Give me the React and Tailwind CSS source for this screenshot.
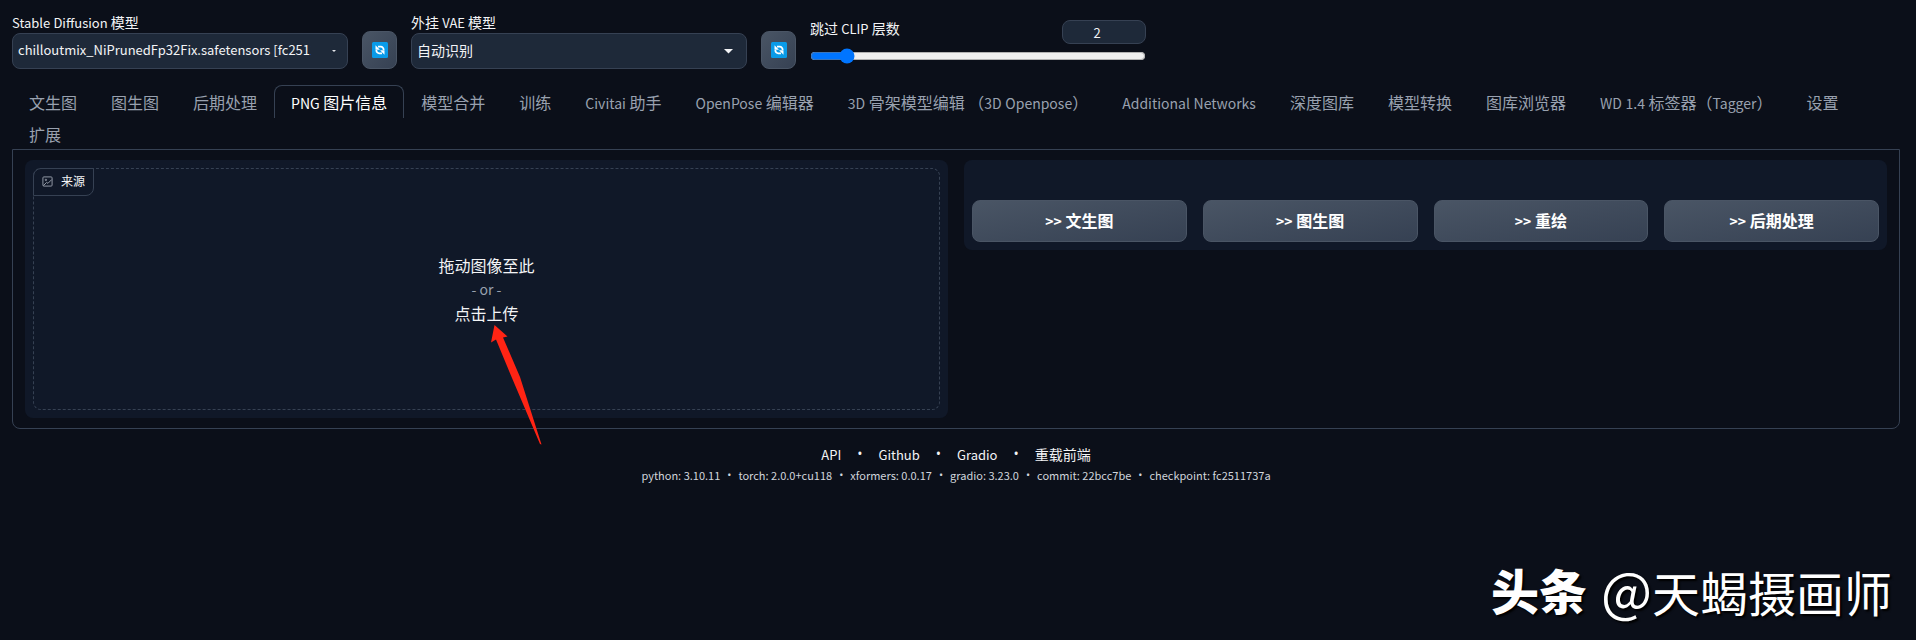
import React from 'react';
import clsx from 'clsx';

const TABS = [
  '文生图',
  '图生图',
  '后期处理',
  'PNG 图片信息',
  '模型合并',
  '训练',
  'Civitai 助手',
  'OpenPose 编辑器',
  '3D 骨架模型编辑 （3D Openpose）',
  'Additional Networks',
  '深度图库',
  '模型转换',
  '图库浏览器',
  'WD 1.4 标签器（Tagger）',
  '设置',
  '扩展',
];

const SEND_TO = ['文生图', '图生图', '重绘', '后期处理'];

const LINKS = ['API', 'Github', 'Gradio', '重载前端'];

const VERSIONS = [
  'python: 3.10.11',
  'torch: 2.0.0+cu118',
  'xformers: 0.0.17',
  'gradio: 3.23.0',
  'commit: 22bcc7be',
  'checkpoint: fc2511737a',
];

const Mixed = ({ text, latin }) => (
  <span>
    {text.split(/([\x21-\x7e]+)/).map((part, i) =>
      i % 2 ? (
        <span key={i} className={clsx('leading-none', latin)}>{part}</span>
      ) : (
        part
      )
    )}
  </span>
);

const RefreshButton = ({ label }) => (
  <button
    type="button"
    aria-label={label}
    className="flex h-[38px] w-[35px] shrink-0 items-center justify-center rounded-lg border border-gray-600 bg-linear-to-br from-gray-600 to-gray-700"
  >
    <svg width="16" height="16" viewBox="0 0 16 16">
      <rect width="16" height="16" rx="1.5" fill="#0a9be8" />
      <g fill="none" stroke="#fff" strokeWidth="1.8">
        <path d="M6 4.700h2.800a2.800 2.800 0 0 1 2.800 2.800v.5" />
        <path d="M10 11.300H7.200a2.800 2.800 0 0 1-2.800-2.800V8" />
      </g>
      <path d="M3.500 3.200v4.600h4.400zM12.500 12.800V8.200H8.100z" fill="#fff" />
    </svg>
  </button>
);

const Dropdown = ({ id, label, value, className, caret }) => (
  <div className="w-[336px]">
    <label htmlFor={id} className="block text-sm leading-5 text-gray-100">
      <Mixed text={label} latin="text-[13px]" />
    </label>
    <div className="relative mt-px">
      <select
        id={id}
        className={clsx(
          'block h-9 w-full appearance-none rounded-lg border border-gray-700 bg-gray-800 pr-9 pb-0.5 pl-[5px] text-gray-100',
          className
        )}
      >
        <option>{value}</option>
      </select>
      {caret}
    </div>
  </div>
);

const QuickSettings = () => (
  <div className="flex flex-wrap items-end gap-[14px]">
    <Dropdown
      id="checkpoint"
      label="Stable Diffusion 模型"
      value="chilloutmix_NiPrunedFp32Fix.safetensors [fc2511737a]"
      className="text-[13px]"
      caret={
        <svg className="pointer-events-none absolute top-4 right-3" width="4" height="4" viewBox="0 0 4 4">
          <path d="M0 1h4L2 3z" fill="#e5e7eb" />
        </svg>
      }
    />
    <RefreshButton label="刷新模型" />
    <Dropdown
      id="vae"
      label="外挂 VAE 模型"
      value="自动识别"
      className="text-sm"
      caret={
        <svg className="pointer-events-none absolute top-4 right-[14px]" width="9" height="5" viewBox="0 0 9 5">
          <path d="M0 0h9L4.500 4.500z" fill="#f3f4f6" />
        </svg>
      }
    />
    <RefreshButton label="刷新 VAE" />
    <div className="w-[336px]">
      <div className="flex items-start justify-between">
        <label htmlFor="clip" className="text-sm leading-4 text-gray-100">
          <Mixed text="跳过 CLIP 层数" latin="text-[13px]" />
        </label>
        <input
          type="text"
          aria-label="CLIP"
          defaultValue="2"
          className="h-6 w-[84px] rounded-lg border border-gray-700 bg-gray-800 pr-[14px] text-center text-[13px] text-gray-100"
        />
      </div>
      <input id="clip" type="range" min="1" max="12" defaultValue="2" className="mt-1 mb-[5px] block h-4 w-full" />
    </div>
  </div>
);

const Tabs = () => (
  <nav role="tablist" className="flex flex-wrap">
    {TABS.map((tab) => (
      <button
        key={tab}
        type="button"
        role="tab"
        aria-selected={tab === 'PNG 图片信息'}
        className={clsx(
          '-mb-px rounded-t-lg border border-b-0 px-4 py-1 text-base leading-6 whitespace-nowrap',
          tab === 'PNG 图片信息' ? 'border-gray-700 text-white' : 'border-transparent text-gray-400'
        )}
      >
        <Mixed text={tab} latin="text-sm leading-none" />
      </button>
    ))}
  </nav>
);

const ImageDrop = () => (
  <div className="rounded-lg bg-gray-900 p-2">
    <div className="relative flex h-[242px] flex-col items-center justify-center rounded-lg border border-dashed border-gray-700">
      <div className="absolute -top-px -left-px flex h-7 items-center gap-2 rounded-tl-lg rounded-br-lg border border-gray-700 px-2 pb-0.5 text-xs text-gray-100">
        <svg width="11" height="11" viewBox="0 0 24 24" fill="none" stroke="#9ca3af" strokeWidth="2">
          <rect x="2" y="2" width="20" height="20" rx="2" />
          <circle cx="8.500" cy="8.500" r="1.500" />
          <path d="M3 21l7-7 3 2 8-8" />
        </svg>
        来源
      </div>
      <button type="button" className="text-base leading-6 text-gray-100">
        拖动图像至此
        <span className="block text-sm leading-6 text-gray-400">- or -</span>
        点击上传
      </button>
      {/* Arrow to the upload text */}
      <svg className="absolute top-[156px] left-1/2 ml-1" width="52" height="121" viewBox="0 0 52 121">
        <path d="M3.500 0L16.500 11.500L12 12.500L29 52L50.500 119.500L49 119L21 53L5 14.500L0 17.500z" fill="#ff2414" />
      </svg>
    </div>
  </div>
);

const SendButtons = () => (
  <div className="grid grid-cols-4 gap-4 rounded-lg bg-gray-900 px-2 pt-10 pb-2">
    {SEND_TO.map((name) => (
      <button
        key={name}
        type="button"
        className="h-[42px] rounded-lg border border-gray-600 bg-linear-to-br from-gray-600 to-gray-700 pb-0.5 text-base font-bold text-white"
      >
        <Mixed text={`>> ${name}`} latin="text-sm leading-none" />
      </button>
    ))}
  </div>
);

const Footer = () => (
  <footer className="mt-[15px] mr-1 text-center">
    <div className="flex justify-center text-sm leading-5 text-gray-100">
      {LINKS.map((link, i) => (
        <React.Fragment key={link}>
          {i > 0 && <span className="px-4 font-['Open_Sans',sans-serif]">•</span>}
          <a href="#">
            <Mixed text={link} latin="text-[13px]" />
          </a>
        </React.Fragment>
      ))}
    </div>
    <div className="mt-[3px] flex justify-center text-[11px] leading-4 text-gray-300">
      {VERSIONS.map((version, i) => (
        <React.Fragment key={version}>
          {i > 0 && <span className="px-[7px] font-['Open_Sans',sans-serif]">•</span>}
          <span>{version}</span>
        </React.Fragment>
      ))}
    </div>
  </footer>
);

const App = () => (
  <div className="relative min-h-screen bg-[#0b0f19] px-3 pt-3 font-['Noto_Sans_CJK_SC',sans-serif]">
    <QuickSettings />
    <main className="mt-4 mr-1">
      <Tabs />
      <div className="grid grid-cols-2 items-start gap-4 rounded-b-lg border border-gray-700 px-3 py-[10px]">
        <ImageDrop />
        <SendButtons />
      </div>
    </main>
    <Footer />
    <div className="absolute right-6 bottom-3 flex items-center gap-[14px] pb-3 text-5xl leading-none text-white [text-shadow:2px_2px_2px_#000]">
      <span className="font-black">头条</span>
      <span>
        <Mixed text="@天蝎摄画师" latin="text-[54px]" />
      </span>
    </div>
  </div>
);

export default App;
